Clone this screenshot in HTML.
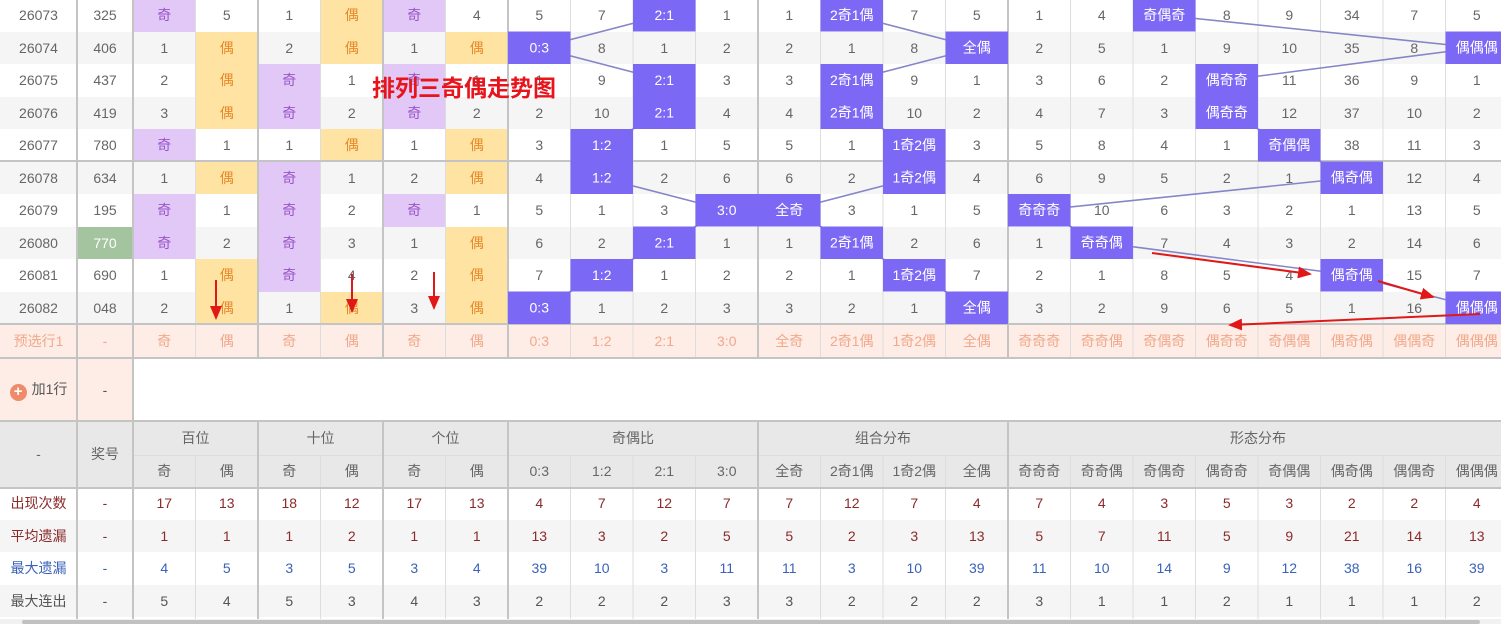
<!DOCTYPE html>
<html><head><meta charset="utf-8"><style>
html,body{margin:0;padding:0;width:1501px;height:624px;overflow:hidden;background:#fff}
body{position:relative;font-family:"Liberation Sans","Noto Sans CJK SC",sans-serif;font-size:14px;color:#666}
table{position:absolute;left:0;top:-1px;border-collapse:separate;border-spacing:0;table-layout:fixed;width:1508px}
td{padding:0;text-align:center;height:32.5px;white-space:nowrap;overflow:hidden}
tr.g td{background:#f5f5f5}
td.o{background:#e2c8f7!important;color:#9a55c8}
td.e{background:#fee3a3!important;color:#e8892a}
tr.p td{background:#fdede6;color:#f2a88a;height:34px}
tr.add td{height:63px;background:#fff}
tr.add td.pk{background:#fdede6;color:#555}
tr.h td{background:#e8e8e8;color:#666;height:33px}
tr.s1 td{color:#8b2a2a}
tr.s2 td{color:#8b2a2a}
tr.s3 td{color:#3a62b8}
tr.s4 td{color:#555}
.plus{display:inline-block;width:17px;height:17px;border-radius:50%;background:#ef8a6a;color:#fff;font-size:15px;line-height:16px;vertical-align:-2px;margin-right:5px;font-weight:bold}
svg{position:absolute;left:0;top:0}
.title{position:absolute;left:372px;top:69px;color:#e8141c;font-weight:bold;font-size:23px;font-family:"Liberation Sans","Noto Sans CJK SC",sans-serif}
</style></head><body>
<table>
<colgroup><col style="width:77px"><col style="width:56px"><col span="22" style="width:62.5px"></colgroup>
<tr><td>26073</td><td>325</td><td class=o>奇</td><td>5</td><td>1</td><td class=e>偶</td><td class=o>奇</td><td>4</td><td>5</td><td>7</td><td></td><td>1</td><td>1</td><td></td><td>7</td><td>5</td><td>1</td><td>4</td><td></td><td>8</td><td>9</td><td>34</td><td>7</td><td>5</td></tr>
<tr class=g><td>26074</td><td>406</td><td>1</td><td class=e>偶</td><td>2</td><td class=e>偶</td><td>1</td><td class=e>偶</td><td></td><td>8</td><td>1</td><td>2</td><td>2</td><td>1</td><td>8</td><td></td><td>2</td><td>5</td><td>1</td><td>9</td><td>10</td><td>35</td><td>8</td><td></td></tr>
<tr><td>26075</td><td>437</td><td>2</td><td class=e>偶</td><td class=o>奇</td><td>1</td><td class=o>奇</td><td>1</td><td>1</td><td>9</td><td></td><td>3</td><td>3</td><td></td><td>9</td><td>1</td><td>3</td><td>6</td><td>2</td><td></td><td>11</td><td>36</td><td>9</td><td>1</td></tr>
<tr class=g><td>26076</td><td>419</td><td>3</td><td class=e>偶</td><td class=o>奇</td><td>2</td><td class=o>奇</td><td>2</td><td>2</td><td>10</td><td></td><td>4</td><td>4</td><td></td><td>10</td><td>2</td><td>4</td><td>7</td><td>3</td><td></td><td>12</td><td>37</td><td>10</td><td>2</td></tr>
<tr><td>26077</td><td>780</td><td class=o>奇</td><td>1</td><td>1</td><td class=e>偶</td><td>1</td><td class=e>偶</td><td>3</td><td></td><td>1</td><td>5</td><td>5</td><td>1</td><td></td><td>3</td><td>5</td><td>8</td><td>4</td><td>1</td><td></td><td>38</td><td>11</td><td>3</td></tr>
<tr class=g><td>26078</td><td>634</td><td>1</td><td class=e>偶</td><td class=o>奇</td><td>1</td><td>2</td><td class=e>偶</td><td>4</td><td></td><td>2</td><td>6</td><td>6</td><td>2</td><td></td><td>4</td><td>6</td><td>9</td><td>5</td><td>2</td><td>1</td><td></td><td>12</td><td>4</td></tr>
<tr><td>26079</td><td>195</td><td class=o>奇</td><td>1</td><td class=o>奇</td><td>2</td><td class=o>奇</td><td>1</td><td>5</td><td>1</td><td>3</td><td></td><td></td><td>3</td><td>1</td><td>5</td><td></td><td>10</td><td>6</td><td>3</td><td>2</td><td>1</td><td>13</td><td>5</td></tr>
<tr class=g><td>26080</td><td style="background:#a3c49f;color:#fff">770</td><td class=o>奇</td><td>2</td><td class=o>奇</td><td>3</td><td>1</td><td class=e>偶</td><td>6</td><td>2</td><td></td><td>1</td><td>1</td><td></td><td>2</td><td>6</td><td>1</td><td></td><td>7</td><td>4</td><td>3</td><td>2</td><td>14</td><td>6</td></tr>
<tr><td>26081</td><td>690</td><td>1</td><td class=e>偶</td><td class=o>奇</td><td>4</td><td>2</td><td class=e>偶</td><td>7</td><td></td><td>1</td><td>2</td><td>2</td><td>1</td><td></td><td>7</td><td>2</td><td>1</td><td>8</td><td>5</td><td>4</td><td></td><td>15</td><td>7</td></tr>
<tr class=g><td>26082</td><td>048</td><td>2</td><td class=e>偶</td><td>1</td><td class=e>偶</td><td>3</td><td class=e>偶</td><td></td><td>1</td><td>2</td><td>3</td><td>3</td><td>2</td><td>1</td><td></td><td>3</td><td>2</td><td>9</td><td>6</td><td>5</td><td>1</td><td>16</td><td></td></tr>
<tr class=p><td>预选行1</td><td>-</td><td>奇</td><td>偶</td><td>奇</td><td>偶</td><td>奇</td><td>偶</td><td>0:3</td><td>1:2</td><td>2:1</td><td>3:0</td><td>全奇</td><td>2奇1偶</td><td>1奇2偶</td><td>全偶</td><td>奇奇奇</td><td>奇奇偶</td><td>奇偶奇</td><td>偶奇奇</td><td>奇偶偶</td><td>偶奇偶</td><td>偶偶奇</td><td>偶偶偶</td></tr>
<tr class=add><td class=pk><span class=plus>+</span>加1行</td><td class=pk>-</td><td colspan=22></td></tr>
<tr class=h><td rowspan=2>-</td><td rowspan=2>奖号</td><td colspan=2>百位</td><td colspan=2>十位</td><td colspan=2>个位</td><td colspan=4>奇偶比</td><td colspan=4>组合分布</td><td colspan=8>形态分布</td></tr>
<tr class=h><td>奇</td><td>偶</td><td>奇</td><td>偶</td><td>奇</td><td>偶</td><td>0:3</td><td>1:2</td><td>2:1</td><td>3:0</td><td>全奇</td><td>2奇1偶</td><td>1奇2偶</td><td>全偶</td><td>奇奇奇</td><td>奇奇偶</td><td>奇偶奇</td><td>偶奇奇</td><td>奇偶偶</td><td>偶奇偶</td><td>偶偶奇</td><td>偶偶偶</td></tr>
<tr class=s1><td>出现次数</td><td>-</td><td>17</td><td>13</td><td>18</td><td>12</td><td>17</td><td>13</td><td>4</td><td>7</td><td>12</td><td>7</td><td>7</td><td>12</td><td>7</td><td>4</td><td>7</td><td>4</td><td>3</td><td>5</td><td>3</td><td>2</td><td>2</td><td>4</td></tr>
<tr class="s2 g"><td>平均遗漏</td><td>-</td><td>1</td><td>1</td><td>1</td><td>2</td><td>1</td><td>1</td><td>13</td><td>3</td><td>2</td><td>5</td><td>5</td><td>2</td><td>3</td><td>13</td><td>5</td><td>7</td><td>11</td><td>5</td><td>9</td><td>21</td><td>14</td><td>13</td></tr>
<tr class=s3><td>最大遗漏</td><td>-</td><td>4</td><td>5</td><td>3</td><td>5</td><td>3</td><td>4</td><td>39</td><td>10</td><td>3</td><td>11</td><td>11</td><td>3</td><td>10</td><td>39</td><td>11</td><td>10</td><td>14</td><td>9</td><td>12</td><td>38</td><td>16</td><td>39</td></tr>
<tr class="s4 g"><td>最大连出</td><td>-</td><td>5</td><td>4</td><td>5</td><td>3</td><td>4</td><td>3</td><td>2</td><td>2</td><td>2</td><td>3</td><td>3</td><td>2</td><td>2</td><td>2</td><td>3</td><td>1</td><td>1</td><td>2</td><td>1</td><td>1</td><td>1</td><td>2</td></tr>
</table>
<svg width="1501" height="624" viewBox="0 0 1501 624">
<defs><marker id="ah" markerWidth="8" markerHeight="8" refX="6" refY="3" orient="auto" markerUnits="strokeWidth"><path d="M0,0 L7,3 L0,6 Z" fill="#e01818"/></marker></defs>
<g stroke="#dddddd" stroke-width="1">
<path d="M195.5 0V358M320.5 0V358M445.5 0V358M570.5 0V358M633 0V358M695.5 0V358M820.5 0V358M883 0V358M945.5 0V358M1070.5 0V358M1133 0V358M1195.5 0V358M1258 0V358M1320.5 0V358M1383 0V358M1445.5 0V358"/>
<path d="M195.5 455V619M320.5 455V619M445.5 455V619M570.5 455V619M633 455V619M695.5 455V619M820.5 455V619M883 455V619M945.5 455V619M1070.5 455V619M1133 455V619M1195.5 455V619M1258 455V619M1320.5 455V619M1383 455V619M1445.5 455V619"/>
<path d="M133 455.5H1501"/>
</g>
<g stroke="#c4c4c4" stroke-width="2">
<path d="M0 161H1501M0 324H1501M0 358H1501M0 421H1501M0 488H1501"/>
<path d="M77 0V619M133 0V619M258 0V358M383 0V358M508 0V358M758 0V358M1008 0V358M258 421V619M383 421V619M508 421V619M758 421V619M1008 421V619"/>
</g>
<g stroke="#8585c8" stroke-width="1.6" fill="none">
<polyline points="664.25,15.25 539.25,47.75 664.25,80.25 664.25,112.75 601.75,145.25 601.75,177.75 726.75,210.25 664.25,242.75 601.75,275.25 539.25,307.75"/>
<polyline points="851.75,15.25 976.75,47.75 851.75,80.25 851.75,112.75 914.25,145.25 914.25,177.75 789.25,210.25 851.75,242.75 914.25,275.25 976.75,307.75"/>
<polyline points="1164.25,15.25 1476.75,47.75 1226.75,80.25 1226.75,112.75 1289.25,145.25 1351.75,177.75 1039.25,210.25 1101.75,242.75 1351.75,275.25 1476.75,307.75"/>
</g>
<g fill="#7b68f5">
<rect x="633" y="-1" width="62.5" height="32.5"/><rect x="508" y="31.5" width="62.5" height="32.5"/><rect x="633" y="64" width="62.5" height="32.5"/><rect x="633" y="96.5" width="62.5" height="32.5"/><rect x="570.5" y="129" width="62.5" height="32.5"/><rect x="570.5" y="161.5" width="62.5" height="32.5"/><rect x="695.5" y="194" width="62.5" height="32.5"/><rect x="633" y="226.5" width="62.5" height="32.5"/><rect x="570.5" y="259" width="62.5" height="32.5"/><rect x="508" y="291.5" width="62.5" height="32.5"/>
<rect x="820.5" y="-1" width="62.5" height="32.5"/><rect x="945.5" y="31.5" width="62.5" height="32.5"/><rect x="820.5" y="64" width="62.5" height="32.5"/><rect x="820.5" y="96.5" width="62.5" height="32.5"/><rect x="883" y="129" width="62.5" height="32.5"/><rect x="883" y="161.5" width="62.5" height="32.5"/><rect x="758" y="194" width="62.5" height="32.5"/><rect x="820.5" y="226.5" width="62.5" height="32.5"/><rect x="883" y="259" width="62.5" height="32.5"/><rect x="945.5" y="291.5" width="62.5" height="32.5"/>
<rect x="1133" y="-1" width="62.5" height="32.5"/><rect x="1445.5" y="31.5" width="62.5" height="32.5"/><rect x="1195.5" y="64" width="62.5" height="32.5"/><rect x="1195.5" y="96.5" width="62.5" height="32.5"/><rect x="1258" y="129" width="62.5" height="32.5"/><rect x="1320.5" y="161.5" width="62.5" height="32.5"/><rect x="1008" y="194" width="62.5" height="32.5"/><rect x="1070.5" y="226.5" width="62.5" height="32.5"/><rect x="1320.5" y="259" width="62.5" height="32.5"/><rect x="1445.5" y="291.5" width="62.5" height="32.5"/>
</g>
<g fill="#fff" font-size="14" text-anchor="middle" font-family="Liberation Sans, Noto Sans CJK SC, sans-serif">
<text x="664.25" y="20">2:1</text><text x="539.25" y="52.5">0:3</text><text x="664.25" y="85">2:1</text><text x="664.25" y="117.5">2:1</text><text x="601.75" y="150">1:2</text><text x="601.75" y="182.5">1:2</text><text x="726.75" y="215">3:0</text><text x="664.25" y="247.5">2:1</text><text x="601.75" y="280">1:2</text><text x="539.25" y="312.5">0:3</text>
<text x="851.75" y="20">2奇1偶</text><text x="976.75" y="52.5">全偶</text><text x="851.75" y="85">2奇1偶</text><text x="851.75" y="117.5">2奇1偶</text><text x="914.25" y="150">1奇2偶</text><text x="914.25" y="182.5">1奇2偶</text><text x="789.25" y="215">全奇</text><text x="851.75" y="247.5">2奇1偶</text><text x="914.25" y="280">1奇2偶</text><text x="976.75" y="312.5">全偶</text>
<text x="1164.25" y="20">奇偶奇</text><text x="1476.75" y="52.5">偶偶偶</text><text x="1226.75" y="85">偶奇奇</text><text x="1226.75" y="117.5">偶奇奇</text><text x="1289.25" y="150">奇偶偶</text><text x="1351.75" y="182.5">偶奇偶</text><text x="1039.25" y="215">奇奇奇</text><text x="1101.75" y="247.5">奇奇偶</text><text x="1351.75" y="280">偶奇偶</text><text x="1476.75" y="312.5">偶偶偶</text>
</g>
<g stroke="#e01818" stroke-width="2" fill="none" marker-end="url(#ah)">
<line x1="216" y1="280" x2="216" y2="318"/><line x1="352" y1="274" x2="352" y2="311"/><line x1="434" y1="272" x2="434" y2="308"/>
<line x1="1152" y1="253" x2="1310" y2="274"/><line x1="1378" y1="281" x2="1433" y2="297"/><line x1="1480" y1="314" x2="1230" y2="325"/>
</g>
<rect x="0" y="619" width="1501" height="5" fill="#f1f1f1"/>
<rect x="22" y="620" width="1458" height="4" rx="2" fill="#c1c1c1"/>
</svg>
<div class="title">排列三奇偶走势图</div>
</body></html>
